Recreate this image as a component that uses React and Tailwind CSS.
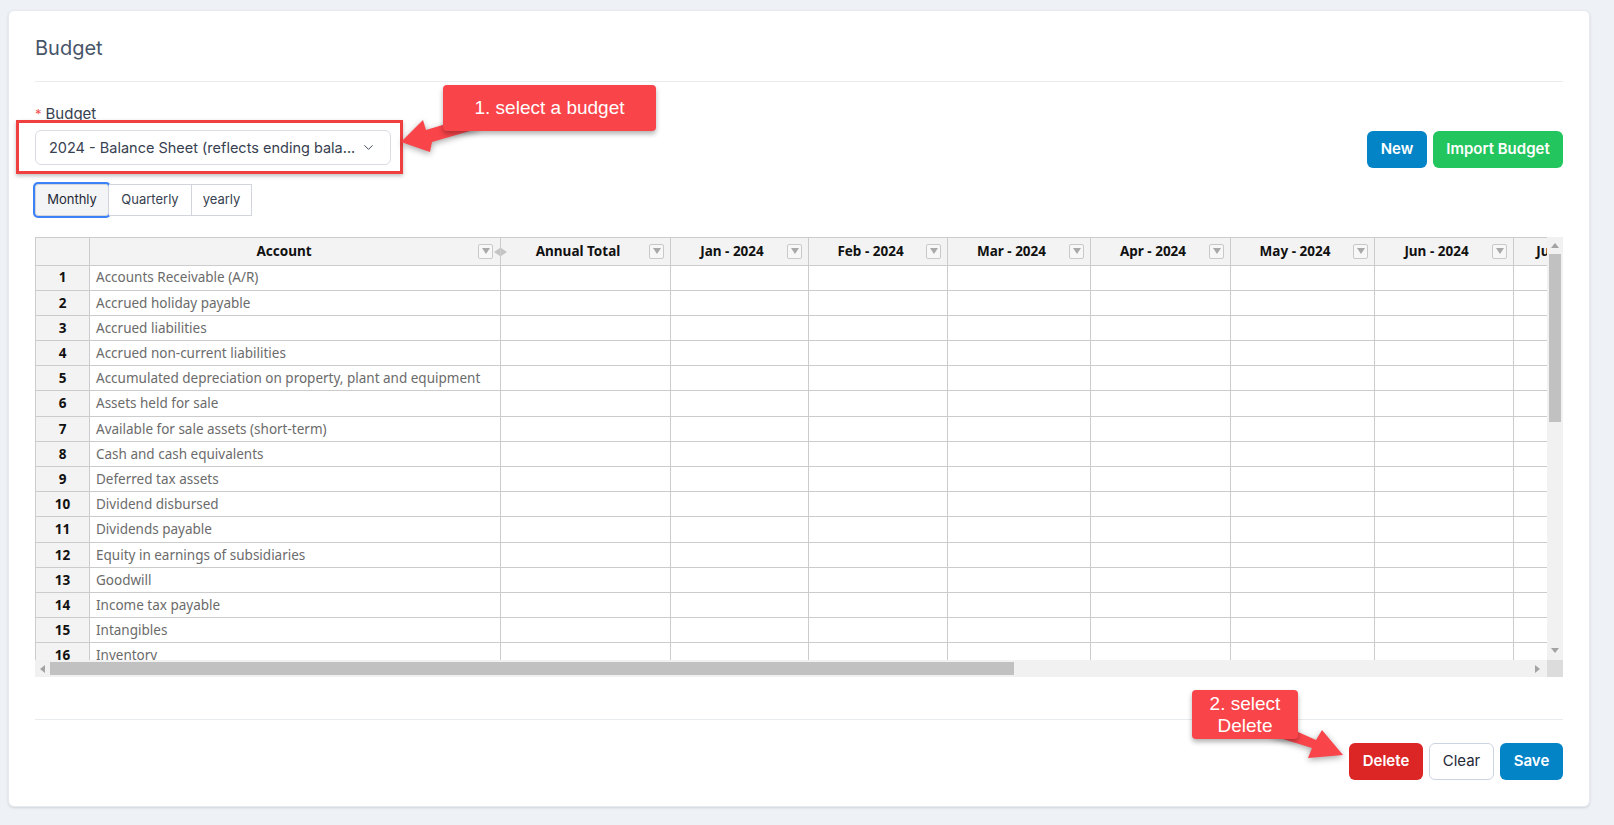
import React from "react";
import { ChevronDown } from "lucide-react";

const accounts = [
  "Accounts Receivable (A/R)",
  "Accrued holiday payable",
  "Accrued liabilities",
  "Accrued non-current liabilities",
  "Accumulated depreciation on property, plant and equipment",
  "Assets held for sale",
  "Available for sale assets (short-term)",
  "Cash and cash equivalents",
  "Deferred tax assets",
  "Dividend disbursed",
  "Dividends payable",
  "Equity in earnings of subsidiaries",
  "Goodwill",
  "Income tax payable",
  "Intangibles",
  "Inventory",
];

const periods = [
  { label: "Annual Total", w: "w-[170px]" },
  { label: "Jan - 2024", w: "w-[138px]" },
  { label: "Feb - 2024", w: "w-[139px]" },
  { label: "Mar - 2024", w: "w-[143px]" },
  { label: "Apr - 2024", w: "w-[140px]" },
  { label: "May - 2024", w: "w-[144px]" },
  { label: "Jun - 2024", w: "w-[139px]" },
  { label: "Jul - 2024", w: "w-[120px]" },
];

const FilterIcon = () => (
  <span className="flex h-[15px] w-[15px] shrink-0 items-center justify-center rounded-[2px] border border-[#c9c9c9] bg-[#f7f7f7]">
    <svg width="8" height="6" viewBox="0 0 8 6">
      <path d="M0 0h8L4 6z" fill="#a9a9a9" />
    </svg>
  </span>
);

const Tri = ({ dir }) => {
  const d = {
    up: "M0 5L4 0L8 5z",
    down: "M0 0h8L4 5z",
    left: "M5 0v8L0 4z",
    right: "M0 0v8l5-4z",
  }[dir];
  const vertical = dir === "up" || dir === "down";
  return (
    <svg width={vertical ? 8 : 5} height={vertical ? 5 : 8} viewBox={vertical ? "0 0 8 5" : "0 0 5 8"}>
      <path d={d} fill="#a3a3a3" />
    </svg>
  );
};

const Sheet = () => {
  return (
    <div className="flex w-[1528px] flex-col font-['Noto_Sans','Open_Sans',sans-serif]">
      <div className="flex h-[423px]">
        <div className="h-full w-[1512px] overflow-hidden">
          <div className="flex w-max">
            <div className="h-[28.5px] w-[55px] shrink-0 border-x border-y border-[#cccccc] bg-[#f3f3f3]" />
            <div className="relative flex h-[28.5px] w-[411px] shrink-0 items-center border-y border-r border-[#cccccc] bg-[#f3f3f3] pr-[7px]">
              <span className="flex-1 text-center text-[13.5px] font-bold text-[#111]">Account</span>
              <FilterIcon />
              <span className="absolute right-[-7px] top-[10px] flex gap-[1px]">
                <svg width="6" height="8" viewBox="0 0 6 8"><path d="M6 0v8L0 4z" fill="#c4c4c4" /></svg>
                <svg width="6" height="8" viewBox="0 0 6 8"><path d="M0 0v8l6-4z" fill="#c4c4c4" /></svg>
              </span>
            </div>
            {periods.map((p) => (
              <div
                key={p.label}
                className={`flex h-[28.5px] ${p.w} shrink-0 items-center border-y border-r border-[#cccccc] bg-[#f3f3f3] pr-[6px]`}
              >
                <span className="flex-1 whitespace-nowrap pl-[6px] text-center text-[13.5px] font-bold text-[#111]">
                  {p.label}
                </span>
                <FilterIcon />
              </div>
            ))}
          </div>
          {accounts.map((a, i) => (
            <div key={a} className="flex w-max">
              <div className="flex h-[25.2px] w-[55px] shrink-0 items-center justify-center border-x border-b border-[#cccccc] bg-[#f3f3f3] text-[13.5px] font-bold text-[#111]">
                {i + 1}
              </div>
              <div className="flex h-[25.2px] w-[411px] shrink-0 items-center border-b border-r border-[#cccccc] pl-[6px] text-[13.5px] text-[#6b6b6b]">
                {a}
              </div>
              {periods.map((p) => (
                <div key={p.label} className={`h-[25.2px] ${p.w} shrink-0 border-b border-r border-[#cccccc] bg-white`} />
              ))}
            </div>
          ))}
        </div>
        <div className="flex h-full w-[16px] shrink-0 flex-col items-center bg-[#f1f1f1]">
          <div className="flex h-[17px] items-center">
            <Tri dir="up" />
          </div>
          <div className="h-[168px] w-[12px] bg-[#c1c1c1]" />
          <div className="flex-1" />
          <div className="flex h-[16px] items-center pb-[4px]">
            <Tri dir="down" />
          </div>
        </div>
      </div>
      <div className="flex h-[17px]">
        <div className="flex w-[1512px] items-center bg-[#f1f1f1]">
          <div className="flex w-[15px] justify-center">
            <Tri dir="left" />
          </div>
          <div className="h-[13px] w-[964px] bg-[#c1c1c1]" />
          <div className="flex-1" />
          <div className="flex w-[15px] justify-center pr-[4px]">
            <Tri dir="right" />
          </div>
        </div>
        <div className="w-[16px] bg-[#dcdcdc]" />
      </div>
    </div>
  );
};

const App = () => {
  return (
    <div className="min-h-[825px] w-full bg-[#eef2f6] pl-[8px] pr-[24px] pt-[10px] font-['Inter',sans-serif]">
      <div className="relative rounded-md border border-[#e6e9ee] bg-white px-[26px] pb-[26px] pt-[22px] shadow-sm">
        <h1 className="h-[30px] text-[20px] leading-[30px] font-normal text-[#475569]">Budget</h1>
        <div className="mt-[18px] border-t border-[#e9ecef]" />

        <div className="mt-[22px] text-[15px] leading-[20px] text-[#374151]">
          <span className="mr-[4px] text-[13px] text-[#f05252]">*</span>Budget
        </div>

        <div className="mt-[6px] flex items-start justify-between">
          <div className="relative">
            <div className="pointer-events-none absolute -bottom-[9px] -left-[19px] -right-[12px] -top-[10px] border-[3px] border-[#ef3f3f] shadow-[0_2px_4px_rgba(0,0,0,0.25)]" />
            <div className="flex h-[35px] w-[356px] items-center justify-between rounded-md border border-[#d8dce2] bg-white pl-[13px] pr-[14px]">
              <span className="whitespace-nowrap text-[14.5px] text-[#374151]">2024 - Balance Sheet (reflects ending bala...</span>
              <ChevronDown size={15} strokeWidth={1.5} className="text-[#374151]" />
            </div>
          </div>
          <div className="mt-[1px] flex gap-[6px]">
            <button className="h-[37px] w-[60px] rounded-md bg-[#0284c7] text-[15px] font-semibold text-white">New</button>
            <button className="h-[37px] w-[130px] rounded-md bg-[#22c55e] text-[15px] font-semibold text-white">Import Budget</button>
          </div>
        </div>

        <div className="mt-[16px] flex">
          <button className="h-[32px] w-[74px] rounded-[3px] border border-[#d1d5db] bg-[#f3f4f6] text-[13px] text-[#1f2937] ring-2 ring-[#3b82f6]">
            Monthly
          </button>
          <button className="h-[32px] w-[83px] border-y border-r border-[#d1d5db] bg-white text-[13px] text-[#374151]">
            Quarterly
          </button>
          <button className="h-[32px] w-[60px] border-y border-r border-[#d1d5db] bg-white text-[13px] text-[#374151]">
            yearly
          </button>
        </div>

        <div className="mt-[21px]">
          <Sheet />
        </div>

        <div className="mt-[42px] border-t border-[#e9ecef]" />

        <div className="mt-[23px] flex justify-end gap-[6px]">
          <button className="h-[37px] w-[74px] rounded-md bg-[#dc2626] text-[15px] font-semibold text-white">Delete</button>
          <button className="h-[37px] w-[65px] rounded-md border border-[#cbd5e1] bg-white text-[15px] text-[#1f2937]">Clear</button>
          <button className="h-[37px] w-[63px] rounded-md bg-[#0284c7] text-[15px] font-semibold text-white">Save</button>
        </div>

        <svg
          className="pointer-events-none absolute left-[-1px] top-[-1px] drop-shadow-[0_2px_3px_rgba(0,0,0,0.35)]"
          width="1582"
          height="797"
          viewBox="8 10 1582 797"
        >
          <polygon points="401,142 423,120 426,130 466,118 480,128 432,142 430,152" fill="#f9444a" />
          <polygon points="1280,724 1316,740 1322,730 1343,755 1308,758 1312,748 1270,735" fill="#f9444a" />
        </svg>

        <div className="absolute left-[434px] top-[74px] flex h-[46px] w-[213px] items-center justify-center rounded-[4px] bg-[#f9444a] font-['Liberation_Sans',Arial,sans-serif] text-[19px] text-white shadow-[0_3px_5px_rgba(0,0,0,0.3)]">
          1. select a budget
        </div>
        <div className="absolute left-[1183px] top-[679px] flex h-[49px] w-[106px] items-center justify-center rounded-[4px] bg-[#f9444a] text-center font-['Liberation_Sans',Arial,sans-serif] text-[19px] leading-[22px] text-white shadow-[0_3px_5px_rgba(0,0,0,0.3)]">
          2. select
          <br />
          Delete
        </div>
      </div>
    </div>
  );
};

export default App;
